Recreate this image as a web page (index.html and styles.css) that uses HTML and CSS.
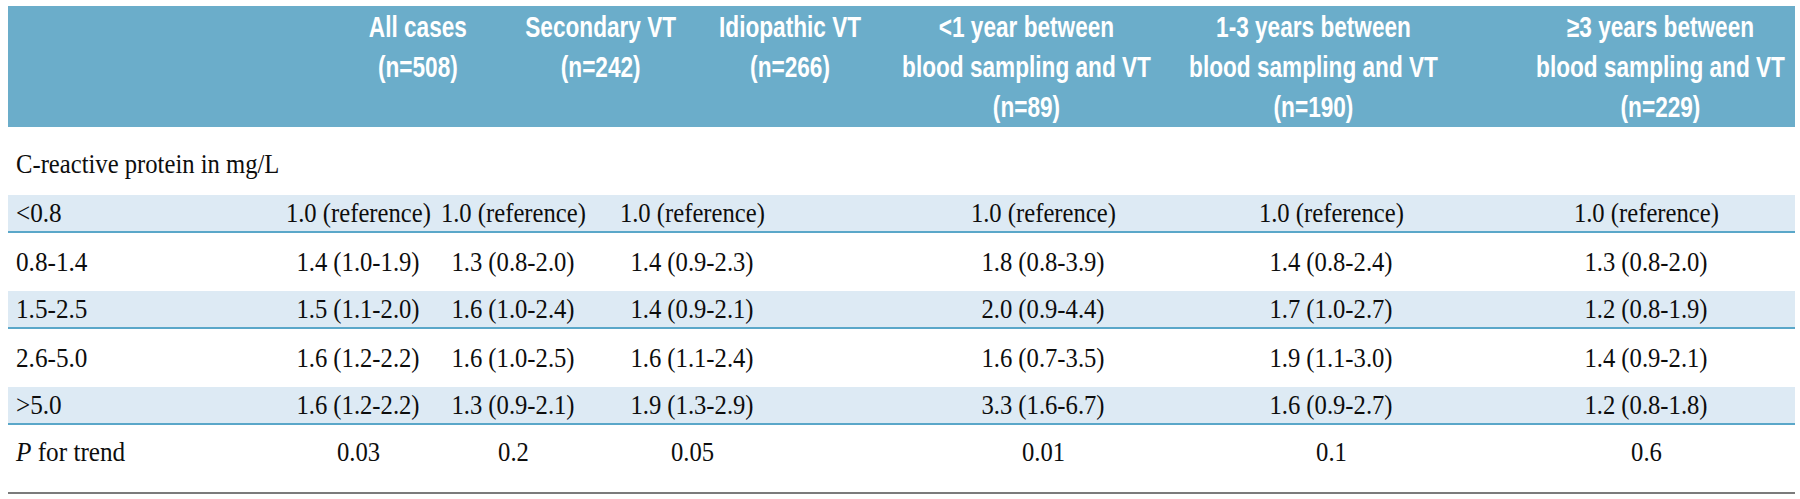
FILE: index.html
```html
<!DOCTYPE html>
<html>
<head>
<meta charset="utf-8">
<link rel="stylesheet" href="styles.css">
</head>
<body>
<div class="table">
  <div class="head">
    <div class="hcell c1"><span class="ht">All cases<br>(n=508)</span></div>
    <div class="hcell c2"><span class="ht">Secondary VT<br>(n=242)</span></div>
    <div class="hcell c3"><span class="ht">Idiopathic VT<br>(n=266)</span></div>
    <div class="hcell c4"><span class="ht">&lt;1 year between<br>blood sampling and VT<br>(n=89)</span></div>
    <div class="hcell c5"><span class="ht">1-3 years between<br>blood sampling and VT<br>(n=190)</span></div>
    <div class="hcell c6"><span class="ht">&ge;3 years between<br>blood sampling and VT<br>(n=229)</span></div>
  </div>
  <div class="section"><span class="sl">C-reactive protein in mg/L</span></div>
  <div class="row stripe">
    <div class="lbl"><span class="t">&lt;0.8</span></div>
    <div class="val c1"><span class="t">1.0 (reference)</span></div><div class="val c2"><span class="t">1.0 (reference)</span></div><div class="val c3"><span class="t">1.0 (reference)</span></div><div class="val c4"><span class="t">1.0 (reference)</span></div><div class="val c5"><span class="t">1.0 (reference)</span></div><div class="val c6"><span class="t">1.0 (reference)</span></div>
  </div>
  <div class="row">
    <div class="lbl"><span class="t">0.8-1.4</span></div>
    <div class="val c1"><span class="t">1.4 (1.0-1.9)</span></div><div class="val c2"><span class="t">1.3 (0.8-2.0)</span></div><div class="val c3"><span class="t">1.4 (0.9-2.3)</span></div><div class="val c4"><span class="t">1.8 (0.8-3.9)</span></div><div class="val c5"><span class="t">1.4 (0.8-2.4)</span></div><div class="val c6"><span class="t">1.3 (0.8-2.0)</span></div>
  </div>
  <div class="row stripe">
    <div class="lbl"><span class="t">1.5-2.5</span></div>
    <div class="val c1"><span class="t">1.5 (1.1-2.0)</span></div><div class="val c2"><span class="t">1.6 (1.0-2.4)</span></div><div class="val c3"><span class="t">1.4 (0.9-2.1)</span></div><div class="val c4"><span class="t">2.0 (0.9-4.4)</span></div><div class="val c5"><span class="t">1.7 (1.0-2.7)</span></div><div class="val c6"><span class="t">1.2 (0.8-1.9)</span></div>
  </div>
  <div class="row">
    <div class="lbl"><span class="t">2.6-5.0</span></div>
    <div class="val c1"><span class="t">1.6 (1.2-2.2)</span></div><div class="val c2"><span class="t">1.6 (1.0-2.5)</span></div><div class="val c3"><span class="t">1.6 (1.1-2.4)</span></div><div class="val c4"><span class="t">1.6 (0.7-3.5)</span></div><div class="val c5"><span class="t">1.9 (1.1-3.0)</span></div><div class="val c6"><span class="t">1.4 (0.9-2.1)</span></div>
  </div>
  <div class="row stripe">
    <div class="lbl"><span class="t">&gt;5.0</span></div>
    <div class="val c1"><span class="t">1.6 (1.2-2.2)</span></div><div class="val c2"><span class="t">1.3 (0.9-2.1)</span></div><div class="val c3"><span class="t">1.9 (1.3-2.9)</span></div><div class="val c4"><span class="t">3.3 (1.6-6.7)</span></div><div class="val c5"><span class="t">1.6 (0.9-2.7)</span></div><div class="val c6"><span class="t">1.2 (0.8-1.8)</span></div>
  </div>
  <div class="row last">
    <div class="lbl"><span class="t"><i>P</i> for trend</span></div>
    <div class="val c1"><span class="t">0.03</span></div><div class="val c2"><span class="t">0.2</span></div><div class="val c3"><span class="t">0.05</span></div><div class="val c4"><span class="t">0.01</span></div><div class="val c5"><span class="t">0.1</span></div><div class="val c6"><span class="t">0.6</span></div>
  </div>
  <div class="rule"></div>
</div>
</body>
</html>
```
FILE: styles.css
```css
html, body {
  margin: 0;
  padding: 0;
  background: #ffffff;
}
body {
  padding: 6px 5px 0 8px;
}
.table {
  width: 1787px;
  font-family: "Liberation Serif", "Times New Roman", serif;
  color: #0d0d0d;
}

/* header: 100px-wide column slots centred on each heading */
.head {
  display: grid;
  grid-template-columns: 360px 100px 83px 100px 89px 100px 136px 100px 187px 100px 247px 100px 1fr;
  background: #6badca;
  height: 121px;
  box-sizing: border-box;
  padding-top: 1px;
}
.head .c1 { grid-column: 2; }
.head .c2 { grid-column: 4; }
.head .c3 { grid-column: 6; }
.head .c4 { grid-column: 8; }
.head .c5 { grid-column: 10; }
.head .c6 { grid-column: 12; }
.hcell {
  display: flex;
  justify-content: center;
  align-items: flex-start;
  font-family: "Liberation Sans", Arial, sans-serif;
  font-weight: bold;
  font-size: 29px;
  line-height: 40px;
  color: #ffffff;
  text-align: center;
  white-space: nowrap;
}
.ht {
  display: inline-block;
  flex: none;
  transform: scaleX(0.78);
  transform-origin: 50% 50%;
}

.section {
  height: 63px;
  box-sizing: border-box;
  padding: 18px 0 0 8px;
  font-size: 28px;
  line-height: 38px;
}
.sl {
  display: inline-block;
  transform: scaleX(0.88);
  transform-origin: 0 50%;
  white-space: nowrap;
}

/* body rows: 100px-wide value slots centred on each data column */
.row {
  display: grid;
  grid-template-columns: 300px 100px 55px 100px 79px 100px 251px 100px 188px 100px 215px 100px 1fr;
  height: 48px;
  align-items: center;
  font-size: 28px;
}
.row .lbl { grid-column: 1; }
.row .c1 { grid-column: 2; }
.row .c2 { grid-column: 4; }
.row .c3 { grid-column: 6; }
.row .c4 { grid-column: 8; }
.row .c5 { grid-column: 10; }
.row .c6 { grid-column: 12; }
.row.stripe {
  height: 38px;
  margin: 5px 0;
  box-sizing: border-box;
  background: #ddeaf4;
  border-bottom: 2px solid #5aa7c9;
}
.row.last {
  height: 44px;
}
.lbl {
  padding-left: 8px;
  white-space: nowrap;
}
.lbl .t {
  display: inline-block;
  transform: scaleX(0.9);
  transform-origin: 0 50%;
}
.val {
  display: flex;
  justify-content: center;
  white-space: nowrap;
}
.val .t {
  display: inline-block;
  flex: none;
  transform: scaleX(0.88);
  transform-origin: 50% 50%;
}
.rule {
  margin-top: 18px;
  height: 2px;
  background: #7b7b7b;
}
```
